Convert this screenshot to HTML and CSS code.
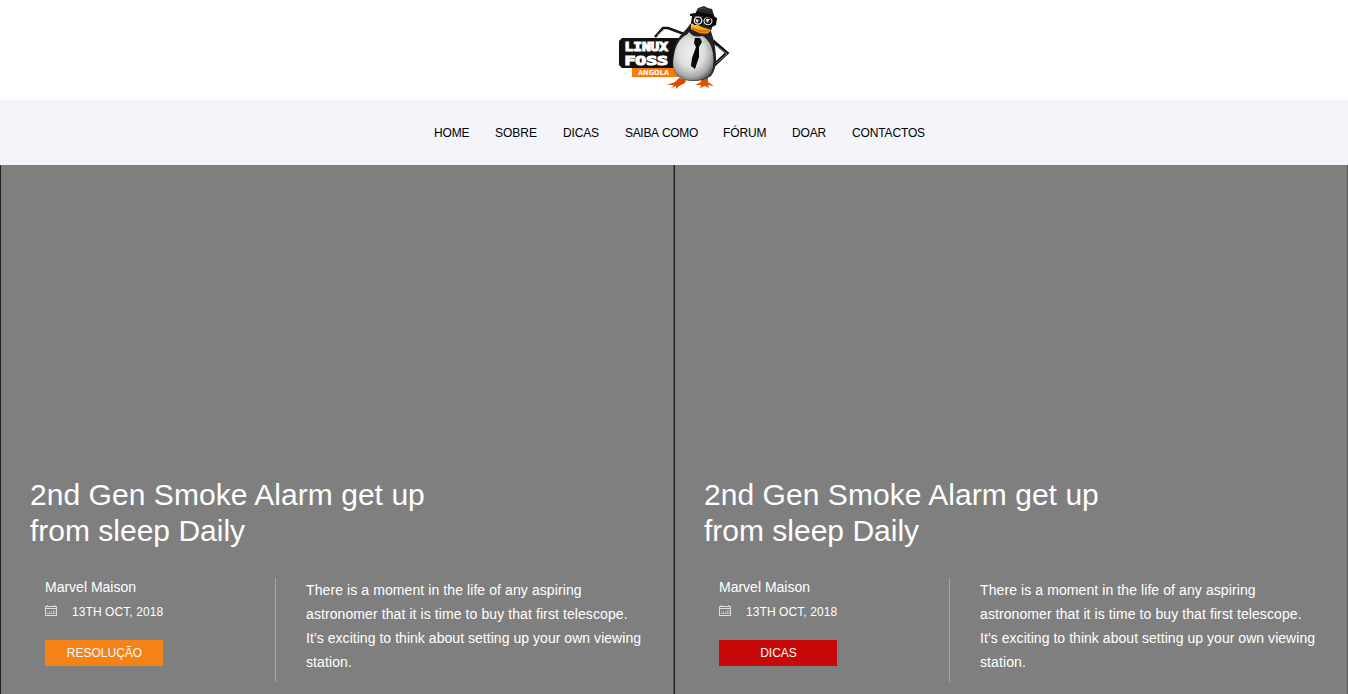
FILE: index.html
```html
<!DOCTYPE html>
<html lang="pt">
<head>
<meta charset="utf-8">
<title>Linux Foss Angola</title>
<link rel="stylesheet" href="styles.css">
</head>
<body>
<header class="header">
  <a class="brand" href="#">
    <svg class="logo" viewBox="0 0 130 100" role="img" aria-label="Linux Foss Angola">
      <defs>
        <radialGradient id="belly" cx=".45" cy=".4" r=".65">
          <stop offset="0" stop-color="#eee"/><stop offset=".5" stop-color="#dedede"/><stop offset=".8" stop-color="#aaa"/><stop offset="1" stop-color="#555"/>
        </radialGradient>
        <linearGradient id="beak" x2="0" y2="1"><stop stop-color="#ffd51c"/><stop offset="1" stop-color="#f47b00"/></linearGradient>
      </defs>
      <path d="M45 37 53 28 58 28 74 34" fill="none" stroke="#151515" stroke-width="2.6"/>
      <path d="M47 35 54 30" stroke="#999" stroke-width=".8"/>
      <path d="M12 38H70V68H12L9 65V41Z" fill="#111"/>
      <rect x="22" y="68" width="46" height="9" fill="#ff7900"/>
      <text class="logo-name" x="14.5" y="50.5" textLength="43.5" lengthAdjust="spacingAndGlyphs">LINUX</text>
      <text class="logo-name" x="14.5" y="65.3" textLength="43.5" lengthAdjust="spacingAndGlyphs">FOSS</text>
      <text class="logo-place" x="28" y="75" textLength="31" lengthAdjust="spacingAndGlyphs">ANGOLA</text>
      <path d="M103 41 117 53 102 67" fill="none" stroke="#111" stroke-width="3.3"/>
      <path d="M107 46 117 54 105 64" fill="none" stroke="#999" stroke-width=".8"/>
      <path d="M69 78 65 82 57 85 64 85 61 88 66 86 66 89 69 86 75 83 76 80Z" fill="#d94b00"/>
      <path d="M90 78 91 82 85 85 91 85 90 88 95 86 99 88 98 85 104 86 98 82 98 78Z" fill="#e25300"/>
      <path d="M80 24C77 30 68 35 65 46C62 60 61 71 69 77C77 83 92 82 101 76C108 67 106 54 105 48C105 40 101 34 100 27Z" fill="#222"/>
      <path d="M78 34C71 37 67 43 65 50C62 63 62 71 69 77C79 83 93 81 100 75C105 67 104 54 101 46C99 41 95 37 91 35Z" fill="url(#belly)"/>
      <path d="M82 17 80 27C78 31 79 34 84 36C92 39 100 36 102 28V18Z" fill="#242424"/>
      <path d="M79 32 84 37 94 36 90 39 83 39 77 35Z" fill="#ccc"/>
      <path d="M85 38H90L92 42 89 47V57L85 69 81 66 82 58 86 47 84 43Z" fill="#080808"/>
      <path d="M81 24C84 23 89 26 92 27L101 30C99 35 93 34 89 33L81 29Z" fill="url(#beak)"/>
      <path d="M82 28 90 31 99 31" fill="none" stroke="#b34c00" stroke-width=".8"/>
      <path d="M82 16 107 18 106 25 102 27 96 26 93 22 91 25 84 25 82 21Z" fill="#050505"/>
      <ellipse cx="88" cy="20.5" rx="3.8" ry="3.6" fill="#222" stroke="#eee" stroke-width="1.3"/>
      <ellipse cx="98" cy="21" rx="4" ry="3.7" fill="#222" stroke="#eee" stroke-width="1.1"/>
      <path d="M85 19 89 20 87 23ZM96 19 100 19 97 23Z" fill="#eee"/>
      <path d="M85 14 88 8 94 6 98 8 102 9 105 18 84 15Z" fill="#282828"/>
      <path d="M80 14C87 12 99 13 107 18L107 20C98 17 88 16 80 16Z" fill="#101010"/>
      <path d="M86 13 103 16" stroke="#090909" stroke-width="3"/>
      <path d="M89 9 94 8 96 10" fill="none" stroke="#555" stroke-width=".8"/>
    </svg>
  </a>
</header>
<nav class="nav">
  <a href="#">HOME</a><a class="nav-loose" href="#">SOBRE</a><a href="#">DICAS</a><a class="nav-wide" href="#">SAIBA COMO</a><a href="#">FÓRUM</a><a href="#">DOAR</a><a href="#">CONTACTOS</a>
</nav>
<main class="slider">
  <article class="slide">
    <h2 class="title"><span class="title-lead">2nd Gen Smoke Alarm get up</span><br>from sleep Daily</h2>
    <div class="details">
      <div class="meta">
        <div class="author">Marvel Maison</div>
        <div class="date"><svg class="calendar" viewBox="0 0 12 11"><path d="M.5 1.5H11.5V10.5H.5ZM0 3.5H12M2.5 0V2M9.5 0V2"/><path class="days" d="M2.5 7V9M4.5 6V9M6.5 6V9M8.5 5V9M10 5V9M2 8.5H10"/></svg>13TH OCT, 2018</div>
        <a class="tag tag-orange" href="#">RESOLUÇÃO</a>
      </div>
      <p class="excerpt">There is a moment in the life of any aspiring<br>astronomer that it is time to buy that first telescope.<br><span class="snug">It’s exciting to think about setting up your own viewing</span><br>station.</p>
    </div>
  </article>
  <article class="slide">
    <h2 class="title"><span class="title-lead">2nd Gen Smoke Alarm get up</span><br>from sleep Daily</h2>
    <div class="details">
      <div class="meta">
        <div class="author">Marvel Maison</div>
        <div class="date"><svg class="calendar" viewBox="0 0 12 11"><path d="M.5 1.5H11.5V10.5H.5ZM0 3.5H12M2.5 0V2M9.5 0V2"/><path class="days" d="M2.5 7V9M4.5 6V9M6.5 6V9M8.5 5V9M10 5V9M2 8.5H10"/></svg>13TH OCT, 2018</div>
        <a class="tag tag-red" href="#">DICAS</a>
      </div>
      <p class="excerpt">There is a moment in the life of any aspiring<br>astronomer that it is time to buy that first telescope.<br><span class="snug">It’s exciting to think about setting up your own viewing</span><br>station.</p>
    </div>
  </article>
</main>
</body>
</html>
```
FILE: styles.css
```css
* { box-sizing: border-box; }
body { margin: 0; height: 694px; overflow: hidden; font-family: "Liberation Sans", Arial, sans-serif; background: #fff; color: #000; }
a { color: inherit; text-decoration: none; }
.header { height: 100px; display: flex; justify-content: center; }
.brand { display: block; height: 100px; width: 128px; }
.logo { display: block; width: 130px; height: 100px; }
.logo-name { font: bold 13px "DejaVu Sans Mono", monospace; fill: #fff; stroke: #fff; stroke-width: 1.2px; }
.logo-place { font: bold 7px "DejaVu Sans", sans-serif; fill: #fff; }
.nav { height: 65px; padding-left: 434px; display: grid; grid-template-columns: 61px 68px 62px 98px 69px 60px auto; align-items: center; background: #f4f5fa; font-size: 12px; letter-spacing: -.14px; white-space: nowrap; }
.nav-loose { letter-spacing: 0; }
.nav-wide { letter-spacing: -.32px; word-spacing: .8px; }
.slider { height: 529px; display: grid; grid-template-columns: 1fr 1fr; }
.slide { padding: 312px 29px 0; border-left: 1px solid #222; border-right: 1px solid #585858; background: #7f7f7f; color: #fff; }
.title { margin: 0; font-size: 30px; line-height: 36px; font-weight: 400; }
.title-lead { letter-spacing: .05px; }
.details { display: flex; margin-top: 29px; }
.meta { width: 246px; height: 104px; padding-left: 15px; border-right: 1px solid #a5a5a5; }
.author { font-size: 14px; line-height: 18px; }
.date { display: flex; align-items: center; height: 16px; margin-top: 8px; font-size: 12px; letter-spacing: .08px; }
.calendar { width: 12px; height: 11px; margin: -3px 15px 0 0; fill: none; stroke: #dedede; stroke-width: 1; }
.days { stroke: #c4c4c4; stroke-width: .8; }
.tag { display: block; width: 118px; height: 26px; margin-top: 20px; padding-left: 1px; font-size: 12px; line-height: 26px; text-align: center; }
.tag-orange { background: #f58216; }
.tag-red { background: #c50909; }
.excerpt { margin: 0 0 0 30px; font-size: 14px; line-height: 24px; letter-spacing: .09px; white-space: nowrap; }
.snug { letter-spacing: .04px; }
```
